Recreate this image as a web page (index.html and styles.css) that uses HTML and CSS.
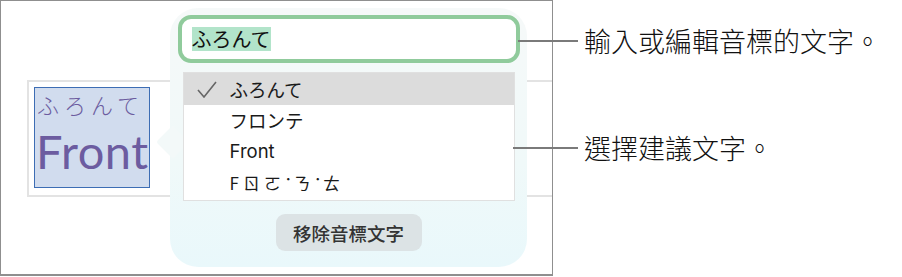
FILE: index.html
```html
<!DOCTYPE html>
<html lang="zh-Hant">
<head>
    <meta charset="UTF-8">
    <title>音標文字</title>
    <link rel="stylesheet" href="styles.css">
</head>
<body>
    <div class="page">
        <div class="frame">
            <div class="field">
                <div class="selection">
                    <div class="ruby">ふろんて</div>
                    <div class="word">Front</div>
                </div>
            </div>

            <div class="popover">
                <div class="input"><span class="hl">ふろんて</span></div>
                <ul class="list">
                    <li class="row active">
                        <svg class="check" width="20" height="17" viewBox="0 0 20 17"><path d="M1 9 L7 16 L19 1" fill="none" stroke="#666" stroke-width="1.6"/></svg>
                        ふろんて
                    </li>
                    <li class="row">フロンテ</li>
                    <li class="row latin">Front</li>
                    <li class="row bopo">Fㄖㄛ<span class="tone">˙</span>ㄋ<span class="tone">˙</span>ㄊ</li>
                </ul>
                <button class="remove">移除音標文字</button>
            </div>
        </div>

        <div class="callout c1"><span class="line"></span>輸入或編輯音標的文字。</div>
        <div class="callout c2"><span class="line"></span>選擇建議文字。</div>
    </div>
</body>
</html>
```

FILE: styles.css
```css
* {
    box-sizing: border-box;
}

body {
    margin: 0;
    background: #fff;
    font-family: "Noto Sans CJK TC", sans-serif;
}

.page {
    position: relative;
    width: 902px;
    height: 277px;
}

.frame {
    position: relative;
    width: 553px;
    height: 276px;
    border: 1px solid #8f8f8f;
    border-bottom-width: 2px;
    overflow: hidden;
}

.field {
    margin: 79px 0 0 26px;
    height: 117px;
    border: 2px solid #e3e3e3;
    border-right: none;
    padding: 5px 0 0 5px;
}

.selection {
    width: 116px;
    height: 101px;
    background: #d1dcee;
    border: 1.5px solid #3d6db4;
    color: #6c5ca0;
    overflow: hidden;
}

.ruby {
    font-size: 22px;
    font-weight: 300;
    letter-spacing: 5px;
    line-height: 30px;
    padding-left: 2px;
    margin-top: 1px;
}

.word {
    font-family: Lato, sans-serif;
    font-size: 47px;
    letter-spacing: 0.5px;
    line-height: 54px;
    margin-top: 5px;
    padding-left: 1px;
    white-space: nowrap;
}

.popover {
    position: absolute;
    left: 169px;
    top: 7px;
    width: 357px;
    height: 259px;
    border-radius: 28px;
    background: linear-gradient(180deg, #f6f9f9 0%, #f0f9f9 60%, #e9f8fb 100%);
    padding: 7px 7px 0 7px;
    display: flex;
    flex-direction: column;
    align-items: center;
}

.popover::before {
    content: "";
    position: absolute;
    left: -9px;
    top: 122px;
    width: 24px;
    height: 24px;
    background: #f3f9f9;
    transform: rotate(45deg);
    border-radius: 3px;
}

.input {
    position: relative;
    width: 342px;
    height: 48px;
    border: 4px solid #90cb9c;
    border-radius: 13px;
    background: #fff;
    padding-left: 10px;
    display: flex;
    align-items: center;
    font-size: 20px;
    color: #111;
}

.hl {
    background: #b2e4ca;
    line-height: 24px;
}

.list {
    position: relative;
    list-style: none;
    margin: 9px 0 0 0;
    padding: 0;
    width: 332px;
    height: 129px;
    background: #fff;
    border: 1px solid #e0e0e0;
    font-size: 18.5px;
    color: #1a1a1a;
}

.row {
    position: relative;
    height: 31px;
    line-height: 31px;
    padding-left: 46px;
}

.row.active {
    height: 32px;
    line-height: 32px;
    background: #dcdcdc;
}

.row.latin {
    font-family: Inter, sans-serif;
    font-size: 18.5px;
}

.row.bopo {
    font-size: 17px;
    letter-spacing: 4px;
}

.tone {
    display: inline-block;
    vertical-align: 0.45em;
    font-size: 13px;
    line-height: 1;
    letter-spacing: 2px;
}

.check {
    position: absolute;
    left: 13px;
    top: 8px;
}

.remove {
    margin-top: 13px;
    width: 146px;
    height: 37px;
    border: none;
    border-radius: 9px;
    background: #dce3e5;
    color: #333;
    font-family: "Noto Sans CJK TC", sans-serif;
    font-size: 18.5px;
    font-weight: 500;
}

.callout {
    position: absolute;
    left: 578px;
    padding-left: 6px;
    display: flex;
    align-items: center;
    font-size: 27px;
    font-weight: 300;
    color: #111;
    line-height: 34px;
}

.callout .line {
    position: absolute;
    right: 100%;
    top: 16px;
    height: 2px;
    background: #7a7a7a;
}

.c1 {
    top: 24px;
}

.c1 .line {
    width: 60px;
}

.c2 {
    top: 131px;
}

.c2 .line {
    width: 65px;
}
```
